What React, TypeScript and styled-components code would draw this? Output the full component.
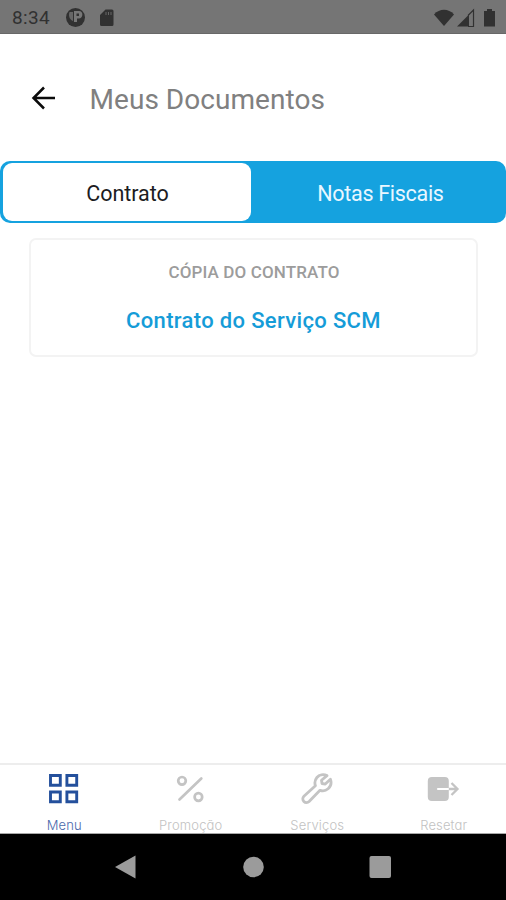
import React from 'react';
import styled, { createGlobalStyle } from 'styled-components';

const GlobalStyle = createGlobalStyle`
  * { box-sizing: border-box; }
  body { margin: 0; background: #fff; font-family: Roboto, "Liberation Sans", sans-serif; }
  button { font: inherit; border: 0; padding: 0; margin: 0; background: none; }
  svg { display: block; flex: none; }
`;

const Screen = styled.div`
  width: 506px;
  height: 900px;
  display: flex;
  flex-direction: column;
  overflow: hidden;
  background: #fff;
`;

const StatusBar = styled.header`
  height: 34px;
  flex: none;
  display: flex;
  align-items: center;
  padding: 0 9px 0 12px;
  background: #757575;
  border-bottom: 1px solid #686868;
  color: #313131;
`;

const Clock = styled.time`
  width: 53px;
  font-size: 19px;
  line-height: 34px;
  letter-spacing: 0.35px;
  padding-top: 3px;
`;

const StatusIcons = styled.div<{ $end?: boolean }>`
  display: flex;
  align-items: center;
  margin-left: ${(p) => (p.$end ? 'auto' : '0')};
  padding-top: 2px;
`;

const TitleBar = styled.div`
  height: 127px;
  flex: none;
  display: flex;
  align-items: center;
  padding: 0 0 0 31px;
`;

const BackButton = styled.button`
  width: 58.5px;
`;

const Title = styled.h1`
  margin: 0;
  padding-top: 5px;
  font-size: 28px;
  line-height: 36px;
  font-weight: 400;
  letter-spacing: 0.05px;
  color: #808080;
`;

const Tabs = styled.div`
  height: 62px;
  flex: none;
  display: flex;
  padding: 2px 0 2px 3px;
  border-radius: 10px;
  background: #15a2df;
`;

const Tab = styled.button<{ $active?: boolean }>`
  flex: ${(p) => (p.$active ? '0 0 248px' : '1')};
  padding: ${(p) => (p.$active ? '2px 0 0 1px' : '2px 0 0 4px')};
  border-radius: 9px;
  font-size: 21.5px;
  letter-spacing: ${(p) => (p.$active ? '-0.05px' : '-0.3px')};
  background: ${(p) => (p.$active ? '#fff' : 'transparent')};
  color: ${(p) => (p.$active ? '#1c1c22' : '#e9f7ff')};
`;

const Content = styled.main`
  flex: 1;
  padding: 15px 28px 0 29px;
`;

const Card = styled.section`
  height: 119px;
  border: 2px solid #f3f3f3;
  border-radius: 7px;
  display: flex;
  flex-direction: column;
  align-items: center;
  padding-top: 21px;
`;

const CardLabel = styled.h2`
  margin: 0;
  padding-left: 1px;
  font-size: 17px;
  line-height: 22px;
  font-weight: 500;
  letter-spacing: 0.13px;
  color: #9c9c9c;
`;

const CardLink = styled.a`
  margin-top: 24px;
  font-size: 22px;
  line-height: 28px;
  font-weight: 500;
  letter-spacing: 0.34px;
  color: #159cd8;
`;

const BottomNav = styled.nav`
  height: 71px;
  flex: none;
  display: flex;
  border-top: 2px solid #ededed;
  border-bottom: 1px solid #a8a8a8;
`;

const NavItem = styled.button<{ $active?: boolean }>`
  flex: 1;
  display: flex;
  flex-direction: column;
  align-items: center;
  padding-top: 6px;
  color: ${(p) => (p.$active ? '#24509c' : '#c4c4c4')};
`;

const NavLabel = styled.span<{ $active?: boolean }>`
  margin-top: 12px;
  padding-left: 2px;
  font-family: Inter, Roboto, sans-serif;
  font-feature-settings: "cv11";
  font-size: 13px;
  line-height: 16px;
  font-weight: 300;
  letter-spacing: 0.15px;
  color: ${(p) => (p.$active ? '#4a69ab' : '#c2c2c2')};
`;

const SystemNav = styled.footer`
  height: 66px;
  flex: none;
  display: flex;
  justify-content: center;
  align-items: center;
  gap: 105px;
  background: #000;
  color: #9b9b9b;
`;

const icon = { width: 34, height: 34, viewBox: '0 0 34 34', fill: 'none', stroke: 'currentColor' };

const GridIcon = () => (
  <svg {...icon} strokeWidth="2.9">
    <path d="M4.500 4.500h9.800v9.800h-9.800zM20.900 4.500h9.800v9.800h-9.800zM4.500 21h9.800v9.800h-9.800zM20.900 21h9.800v9.800h-9.800z" />
  </svg>
);

const PercentIcon = () => (
  <svg {...icon} strokeWidth="2.7" strokeLinecap="round">
    <circle cx="9" cy="9.800" r="3.800" />
    <circle cx="25.400" cy="26" r="3.800" />
    <path d="M28.300 7.500 6.500 28.500" />
  </svg>
);

const WrenchIcon = () => (
  <svg {...icon} strokeWidth="2.800" strokeLinejoin="round">
    <path d="M28 4.600c-3.600-1.700-7.700-1-10.100 1.900-2.100 2.600-2.400 5.600-1.500 8.300L4.900 25.200a3.700 3.700 0 0 0 5.200 5.300L21 19.300c2.700.9 5.800.5 8.100-1.500 2.700-2.400 3.600-6 2.300-9.600l-5.100 4.900-3.300-.6-.5-3.200z" />
  </svg>
);

const ExitIcon = () => (
  <svg {...icon}>
    <rect x="1.800" y="6" width="21" height="24" rx="4" fill="currentColor" stroke="none" />
    <path d="M12 18h11" stroke="#fff" strokeWidth="2.200" strokeLinecap="round" />
    <path d="M22.800 18h9M25.500 12l6 6-6 6" strokeWidth="2.300" />
  </svg>
);

const items = [
  { label: 'Menu', Icon: GridIcon, active: true },
  { label: 'Promoção', Icon: PercentIcon },
  { label: 'Serviços', Icon: WrenchIcon },
  { label: 'Resetar', Icon: ExitIcon },
];

export default function App() {
  return (
    <Screen>
      <GlobalStyle />
      <StatusBar>
        <Clock>8:34</Clock>
        <StatusIcons>
          <svg width="52" height="22" viewBox="0 0 52 22">
            <circle cx="10.500" cy="10.500" r="9.500" fill="currentColor" />
            <path d="M4.500 5h3.500v9C5 13 3 9 4.500 5z" fill="#666" />
            <path d="M9 4h5a3.500 3.500 0 0 1 3.300 4.300c-.3 2-1.500 3.200-3.300 3.200h-2V15H9z" fill="#777" />
            <path d="M11.500 6.500h2.500V9h-2.500z" fill="currentColor" />
            <path d="M40.500 2.500H47a1.500 1.500 0 0 1 1.500 1.500v13.500A1.500 1.500 0 0 1 47 19H36.500a1.500 1.500 0 0 1-1.500-1.500V8z" fill="currentColor" />
            <path d="M41 5v3M43.500 5v3M46 5v3" stroke="#666" strokeWidth="1" />
          </svg>
        </StatusIcons>
        <StatusIcons $end>
          <svg width="63" height="22" viewBox="0 0 63 22" fill="currentColor">
            <path d="M0 7.500C5.500 1.300 14.500 1.300 20 7.500L10 19z" />
            <path d="M23 19.500 35 7.500v12z" />
            <path d="M34 8.500 39.500 3v16.500H34" fill="none" stroke="currentColor" strokeWidth="1.200" />
            <path d="M50 4h3V2h5v2h3v15.500H50z" />
          </svg>
        </StatusIcons>
      </StatusBar>
      <TitleBar>
        <BackButton aria-label="Voltar">
          <svg width="26" height="26" viewBox="0 0 26 26" fill="none" stroke="#0b0b0b" strokeWidth="2.500">
            <path d="M24 13H3M13 2.500 2.500 13 13 23.500" />
          </svg>
        </BackButton>
        <Title>Meus Documentos</Title>
      </TitleBar>
      <Tabs>
        <Tab $active>Contrato</Tab>
        <Tab>Notas Fiscais</Tab>
      </Tabs>
      <Content>
        <Card>
          <CardLabel>CÓPIA DO CONTRATO</CardLabel>
          <CardLink>Contrato do Serviço SCM</CardLink>
        </Card>
      </Content>
      <BottomNav>
        {items.map(({ label, Icon, active }) => (
          <NavItem key={label} $active={active}>
            <Icon />
            <NavLabel $active={active}>{label}</NavLabel>
          </NavItem>
        ))}
      </BottomNav>
      <SystemNav>
        <svg width="22" height="24" viewBox="0 0 22 24" fill="currentColor"><path d="M0 12 20.500 0.500v23z" /></svg>
        <svg width="22" height="22" viewBox="0 0 22 22" fill="currentColor"><circle cx="11.500" cy="11" r="10.300" /></svg>
        <svg width="22" height="22" viewBox="0 0 22 22" fill="currentColor"><rect x="0.500" width="21.500" height="22" rx="2" /></svg>
      </SystemNav>
    </Screen>
  );
}
